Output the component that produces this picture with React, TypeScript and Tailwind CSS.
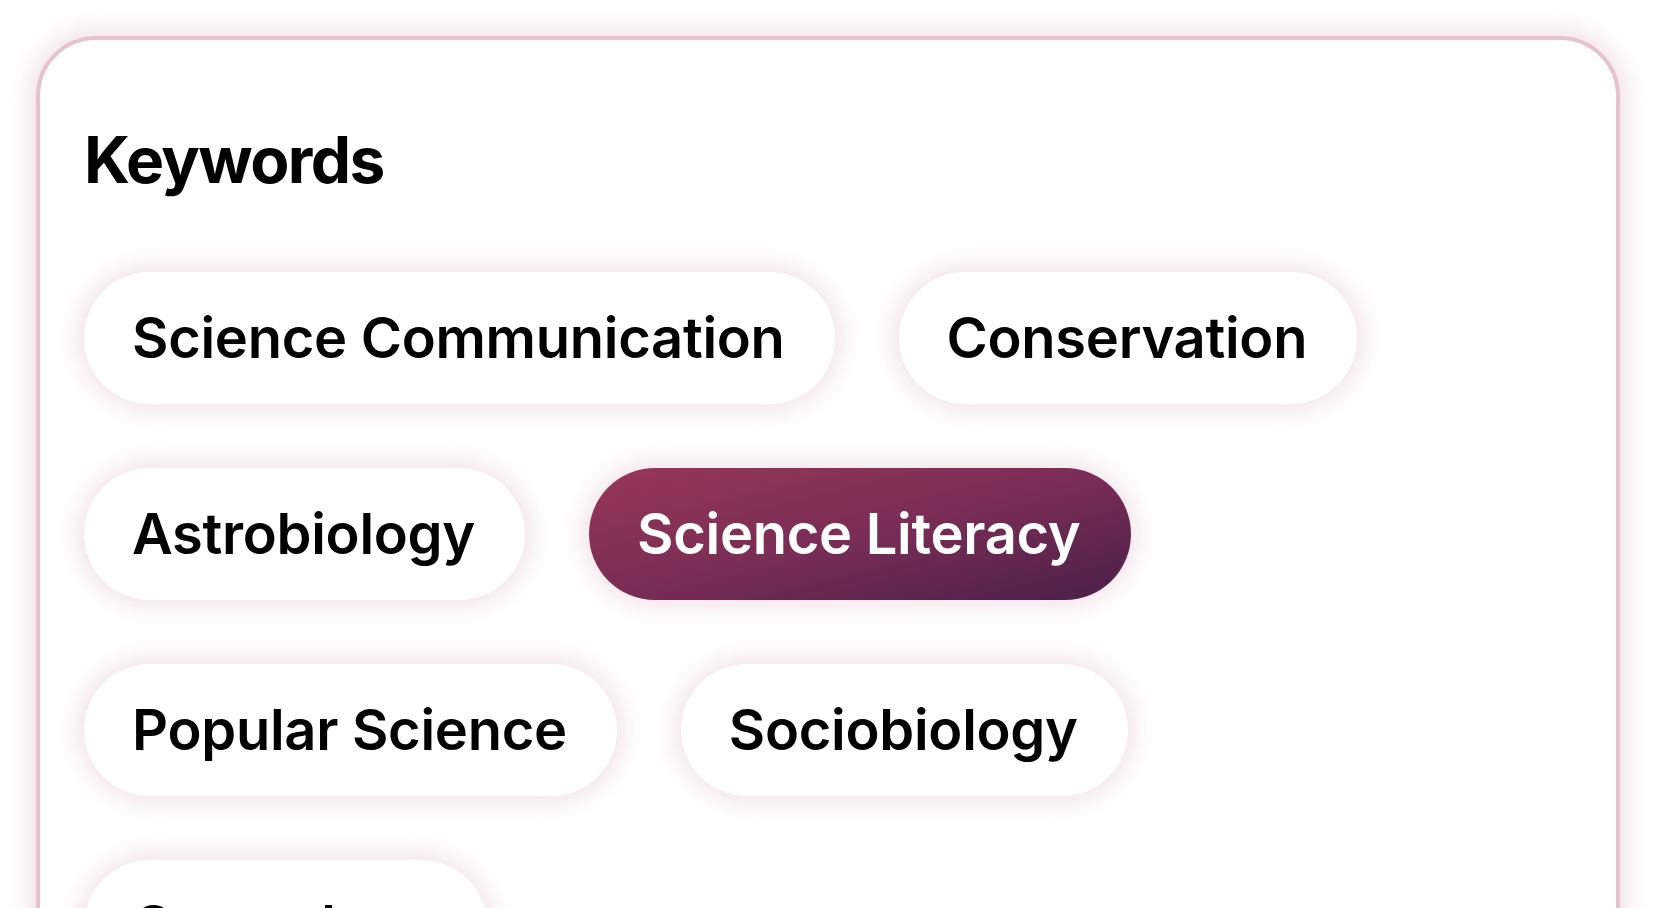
import React from 'react';

const keywords = [
  'Science Communication',
  'Conservation',
  'Astrobiology',
  'Science Literacy',
  'Popular Science',
  'Sociobiology',
  'Cosmology',
];

const ACTIVE = 'Science Literacy';

export default function App() {
  return (
    <div className="min-h-screen bg-white p-9" style={{ fontFamily: 'Inter, "Noto Sans", sans-serif' }}>
      <div className="rounded-[60px] border-[4px] border-[#e5c3cf] bg-white px-[44px] pt-[88px] pb-[60px] shadow-[0_0_24px_6px_rgba(214,160,182,0.32)]">
        <h2 className="text-[64px] font-bold leading-none tracking-[-0.025em] text-black">Keywords</h2>

        {/* keyword chips */}
        <div className="mt-[80px] flex flex-wrap gap-16">
          {keywords.map((k) => {
            const active = k === ACTIVE;
            return (
              <button
                key={k}
                className={`flex h-[132px] items-center rounded-full pl-12 pr-[50px] text-[56px] font-semibold tracking-[-0.005em] text-black shadow-[0_0_24px_6px_rgba(214,160,182,0.3)] ${
                  active
                    ? 'bg-linear-to-br from-[#983659] via-[#7a2d55] to-[#4a1f48] text-white'
                    : 'bg-white'
                }`}
              >
                {k}
              </button>
            );
          })}
        </div>
      </div>
    </div>
  );
}
